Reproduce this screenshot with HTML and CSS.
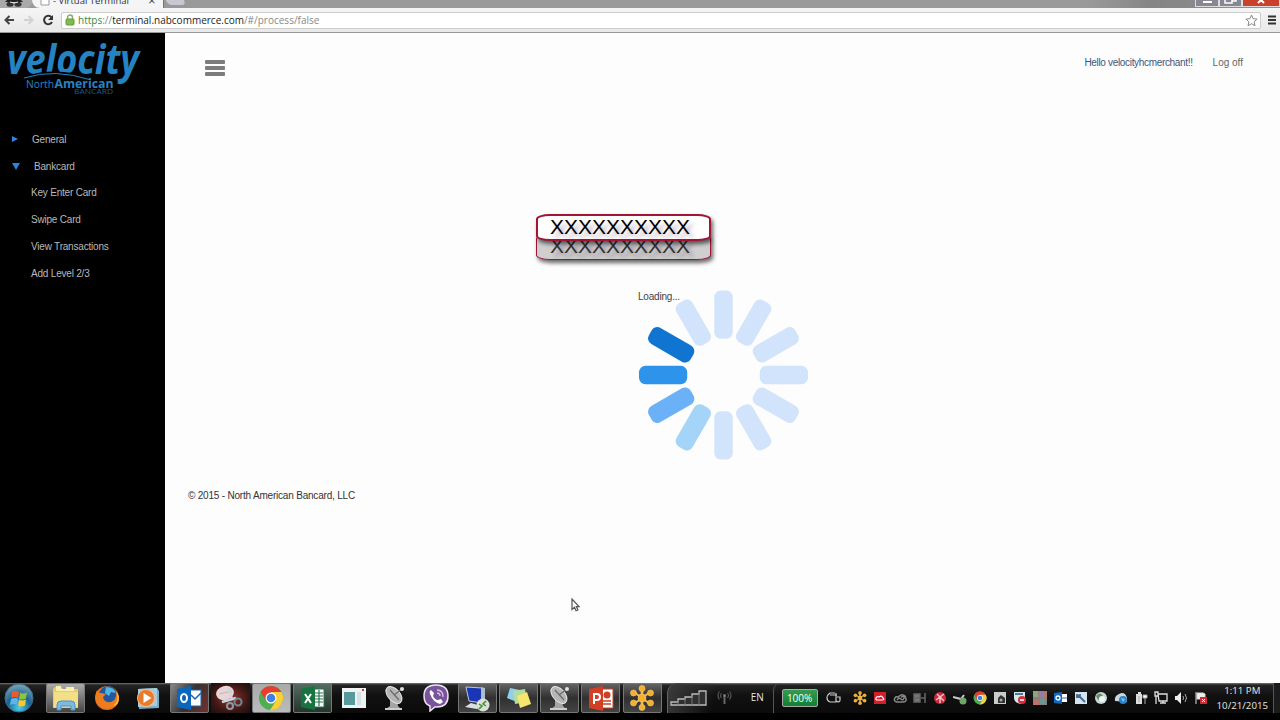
FILE: index.html
```
<!DOCTYPE html>
<html lang="en">
<head>
    <meta charset="UTF-8">
    <title>Virtual Terminal</title>
    <link rel="stylesheet" href="styles.css">
</head>
<body>

<!-- browser chrome -->
<div class="tab-strip">
    <div class="incognito">
        <svg width="30" height="8" viewBox="0 0 30 8"><path d="M7 0h14l2 2H5z" fill="#222"/><ellipse cx="10" cy="4.200" rx="3.500" ry="2.500" fill="#333"/><ellipse cx="18" cy="4.200" rx="3.500" ry="2.500" fill="#333"/><path d="M10 2q4 2 8 0" stroke="#eee" fill="none"/></svg>
    </div>
    <div class="tab">
        <svg class="tab-icon" width="11" height="6"><path d="M1 0v5h8V0" fill="#fff" stroke="#999"/></svg>
        <span class="tab-title">- Virtual Terminal</span>
        <span class="tab-close">×</span>
    </div>
    <div class="new-tab"></div>
    <div class="window-buttons">
        <span class="win-btn"><svg width="22" height="8"><path d="M7 2h9" stroke="#fff" stroke-width="2"/></svg></span>
        <span class="win-btn"><svg width="21" height="8"><path d="M5-1v4h7v-4M9-2h7V1h-4" stroke="#fff" stroke-width="1.500" fill="none"/></svg></span>
        <span class="win-btn close"><svg width="36" height="8"><path d="M15 3l6-6M21 3l-6-6" stroke="#fff" stroke-width="2"/></svg></span>
    </div>
</div>
<div class="toolbar">
    <svg class="nav-icons" width="64" height="22" viewBox="0 0 64 22">
        <path d="M14 11H6M9.500 7L5.500 11l4 4" fill="none" stroke="#444" stroke-width="2"/>
        <path d="M24 11h8M28.500 7l4 4-4 4" fill="none" stroke="#d2d2d2" stroke-width="2"/>
        <path d="M51.500 8.300A4.200 4.200 0 1 0 52 13" fill="none" stroke="#333" stroke-width="2"/>
        <path d="M53 6v5h-5z" fill="#333"/>
    </svg>
    <div class="address-bar">
        <svg width="10" height="12" viewBox="0 0 10 12"><path d="M2.500 6V3.500a2.500 2.500 0 0 1 5 0V6" fill="none" stroke="#87a877" stroke-width="1.500"/><rect x="1" y="5" width="8" height="6" rx="1" fill="#7fbb4d" stroke="#659c40"/></svg>
        <span class="url"><span class="secure">https</span>://<span class="host">terminal.nabcommerce.com</span>/#/process/false</span>
        <svg class="star" width="13" height="13" viewBox="0 0 13 13"><path d="M6.500 1l1.600 3.700 4 .4-3 2.700.9 4-3.500-2.100L3 11.800l.9-4-3-2.700 4-.4z" fill="#fff" stroke="#888"/></svg>
    </div>
    <svg width="10" height="12"><path d="M1 2.500h8M1 6h8M1 9.500h8" stroke="#333" stroke-width="2"/></svg>
</div>

<div class="page">
    <div class="sidebar">
        <svg class="logo" width="160" height="66" viewBox="0 0 160 66">
            <text class="logo-name" x="7" y="41" textLength="132" lengthAdjust="spacingAndGlyphs">velocity</text>
            <path d="M24 45Q55 34 91 46" fill="none" stroke="#000" stroke-width="2.500"/>
            <path d="M24 45Q55 35 91 47" fill="none" stroke="#2583c4"/>
            <text class="logo-north" x="26" y="55" textLength="28" lengthAdjust="spacingAndGlyphs">North</text>
            <text class="logo-american" x="54.500" y="55" textLength="59" lengthAdjust="spacingAndGlyphs">American</text>
            <text class="logo-bancard" x="74" y="61" textLength="39" lengthAdjust="spacingAndGlyphs">BANCARD</text>
        </svg>
        <div class="menu">
            <div class="menu-group"><span class="arrow right"></span>General</div>
            <div class="menu-group open"><span class="arrow down"></span>Bankcard</div>
            <div class="menu-item">Key Enter Card</div>
            <div class="menu-item">Swipe Card</div>
            <div class="menu-item">View Transactions</div>
            <div class="menu-item">Add Level 2/3</div>
        </div>
    </div>

    <div class="content">
        <div class="header">
            <div class="hamburger"><span></span><span></span><span></span></div>
            <div class="user">
                <span class="hello">Hello velocityhcmerchant!!</span>
                <span class="logoff">Log off</span>
            </div>
        </div>
        <div class="masks">
            <div class="mask">XXXXXXXXXX</div>
            <div class="mask mask-back">XXXXXXXXXX</div>
        </div>
        <div class="loading">
            <span class="loading-text">Loading...</span>
            <svg class="spinner" width="171" height="172" viewBox="-86 -86 172 172">
                <defs><rect id="bar" x="-9.300" y="-85" width="18.600" height="48.500" rx="6.500"/></defs>
                <g fill="#d1e4fc">
                    <use href="#bar"/>
                    <use href="#bar" transform="rotate(30)"/>
                    <use href="#bar" transform="rotate(60)"/>
                    <use href="#bar" transform="rotate(90)"/>
                    <use href="#bar" transform="rotate(120)"/>
                    <use href="#bar" transform="rotate(150)"/>
                    <use href="#bar" transform="rotate(180)"/>
                    <use href="#bar" transform="rotate(330)"/>
                </g>
                <use href="#bar" transform="rotate(210)" fill="#a4d4f8"/>
                <use href="#bar" transform="rotate(240)" fill="#6ab1f7"/>
                <use href="#bar" transform="rotate(270)" fill="#2e94eb"/>
                <use href="#bar" transform="rotate(300)" fill="#1075d0"/>
            </svg>
        </div>
        <div class="footer">© 2015 - North American Bancard, LLC</div>
    </div>
</div>

<svg class="cursor" width="9" height="14" viewBox="0 0 9 14"><path d="M1 1v10.500l2.500-2.200 1.600 3.400 1.800-.8-1.500-3.300H8z" fill="#fff" stroke="#555" stroke-width="1.200"/></svg>

<div class="taskbar">
    <div class="start">
        <svg width="30" height="30" viewBox="0 0 30 30">
            <defs><radialGradient id="orb" cx=".5" cy=".85" r=".85"><stop offset="0" stop-color="#49d0ef"/><stop offset=".5" stop-color="#176394"/><stop offset="1" stop-color="#7fa7bb"/></radialGradient></defs>
            <circle cx="15" cy="15" r="14" fill="url(#orb)" stroke="#466b7e"/>
            <path d="M8 9q4-2 7 0l-1 6q-3-2-7 0z" fill="#ea5c28"/><path d="M16 9.500q3 2 7 0l-1 6q-4 2-7 0z" fill="#8bc53f"/>
            <path d="M7 16q4-2 7 0l-1 6q-3-2-7 0z" fill="#5eb5ea"/><path d="M15 16.500q3 2 7 0l-1 6q-4 2-7 0z" fill="#fac82c"/>
        </svg>
    </div>
    <div class="apps">
        <div class="app active bright">
            <svg width="28" height="28" viewBox="0 0 28 28"><path d="M1 5l2-2h6l2 2h15v19H1z" fill="#e9cc68"/><path d="M4 2h5v3h5V3h8v4H4z" fill="#f9efb1"/><path d="M2 8h24v15H2z" fill="#f5df86"/><path d="M5 26v-5q0-4 4-4h10q4 0 4 4v5h-4v-4h-10v4z" fill="#7bb9e6" stroke="#4b91c6"/></svg>
        </div>
        <div class="app">
            <svg width="26" height="26" viewBox="0 0 26 26"><circle cx="13" cy="13" r="12" fill="#e8701a"/><circle cx="14" cy="10" r="9" fill="#2358a0"/><path d="M12 2q8 0 10 6l-5-1-2 4-4-3z" fill="#54b6df"/><path d="M3 5q0 3 4 3l5 1-3 3 1 3q4 4 9 1 4-3 3-9 4 9-2 14-7 5-14 0Q-1 15 3 5z" fill="#ee7d1d"/><path d="M22 7q4 9-3 14 6-1 6-8-1-5-3-6z" fill="#ffc32d"/></svg>
        </div>
        <div class="app">
            <svg width="24" height="24" viewBox="0 0 24 24"><path d="M2 3l19-1 2 3v17l-20 1z" fill="#79abc5"/><path d="M2 3l19-1v18l-19 1z" fill="#a7cddd"/><circle cx="10" cy="12" r="8.500" fill="#e9792b" stroke="#f7bd8b"/><path d="M7.500 7v10l8-5z" fill="#fff"/></svg>
        </div>
        <div class="app active warm">
            <svg width="26" height="24" viewBox="0 0 26 24"><rect x="13" y="4" width="12" height="16" fill="#fff" stroke="#1b65ae"/><path d="M15 9l4 4 6-6" fill="none" stroke="#1b65ae" stroke-width="1.500"/><path d="M1 3l14-3v24l-14-3z" fill="#0b67bb"/><ellipse cx="8" cy="12" rx="3" ry="4" fill="none" stroke="#fff" stroke-width="2"/></svg>
        </div>
        <div class="app red">
            <svg width="30" height="28" viewBox="0 0 30 28"><ellipse cx="10" cy="9" rx="9" ry="7" fill="#e8d5d8" transform="rotate(-15 10 9)"/><path d="M4 10l13-3" stroke="#d5acb5"/><path d="M14 4l3 12M7 18l14-4" stroke="#cfd5da" stroke-width="2.500"/><circle cx="15" cy="22" r="3" fill="none" stroke="#8b9aa8" stroke-width="2"/><circle cx="23" cy="18" r="3.500" fill="none" stroke="#71869b" stroke-width="2"/></svg>
        </div>
        <div class="app active silver">
            <svg width="26" height="26" viewBox="0 0 26 26"><use href="#chrome"/></svg>
        </div>
        <div class="app active green">
            <svg width="26" height="24" viewBox="0 0 26 24"><rect x="13" y="3" width="11" height="18" fill="#fff" stroke="#24754a"/><path d="M15 7h8M15 10h8M15 13h8M15 16h8M19 4v16" stroke="#24754a" stroke-width="1.200"/><path d="M1 3l14-3v24L1 21z" fill="#17733f"/><path d="M5 8l6 9M11 8l-6 9" stroke="#fff" stroke-width="2"/></svg>
        </div>
        <div class="app">
            <svg width="26" height="22" viewBox="0 0 26 22"><path d="M1 1h24v20H1z" fill="#eef2f2"/><path d="M3 5h11v13H3z" fill="#579a9e"/><path d="M16 5h4v13h-4z" fill="#d4e2e4"/><path d="M22 2v2" stroke="#cc3b31" stroke-width="2"/></svg>
        </div>
        <div class="app">
            <svg width="26" height="26" viewBox="0 0 26 26"><use href="#dish"/></svg>
        </div>
        <div class="app">
            <svg width="27" height="28" viewBox="0 0 27 28"><path d="M13 1q12 0 12 11T14 23h-2l-5 4v-5Q1 20 1 12 1 1 13 1z" fill="#79549c" stroke="#eee3f4" stroke-width="1.500"/><path d="M8 6l3 3-1 3q2 4 5 4l3-1 2 3-3 2Q10 18 7 10q-1-3 1-4z" fill="#fff"/><path d="M14 6q6 0 6 7M14 9q3 0 3 3" fill="none" stroke="#d9bfe8" stroke-width="1.300"/></svg>
        </div>
        <div class="app active">
            <svg width="28" height="27" viewBox="0 0 28 27"><path d="M3 2l16 1v15l-13-2z" fill="#1836b5" stroke="#b7c9e7"/><path d="M18 2l4 1v15l-4-1z" fill="#aebdcd"/><path d="M2 22l6-4 10 3-4 3z" fill="#d9dfe4"/><circle cx="20" cy="20" r="6.500" fill="#dae1d4"/><path d="M16 19l3 2-3 3M23 16l-3 3 3 2" fill="none" stroke="#3e8b40" stroke-width="1.500"/></svg>
        </div>
        <div class="app active">
            <svg width="28" height="26" viewBox="0 0 28 26"><path d="M5 3l10 2-3 12-10-4z" fill="#8ed0ee"/><path d="M8 6l12-2 2 13-12 2z" fill="#b2dca0"/><path d="M12 11l10-4 4 12-11 4z" fill="#f7e66e"/></svg>
        </div>
        <div class="app active">
            <svg width="26" height="26" viewBox="0 0 26 26"><use href="#dish"/></svg>
        </div>
        <div class="app active">
            <svg width="26" height="25" viewBox="0 0 26 25"><path d="M14 3h11v19H14z" fill="#fff" stroke="#ce4023"/><circle cx="19" cy="9" r="3.500" fill="#ce4023"/><path d="M15 15h8M15 18h8" stroke="#ce4023" stroke-width="1.500"/><path d="M1 3l14-3v25L1 22z" fill="#d33f24"/><path d="M6 18V8h3q3 0 3 3t-3 3H6" fill="none" stroke="#fff" stroke-width="2"/></svg>
        </div>
        <div class="app active">
            <svg width="26" height="26" viewBox="0 0 26 26"><use href="#flower"/></svg>
        </div>
    </div>

    <div class="network">
        <svg width="38" height="18" viewBox="0 0 38 18"><path d="M1 16v-3h7v-3h7V8h7V5h7V2h7v14z" fill="#303030" stroke="#bbb" stroke-width="1.300"/><path d="M8 12v4M15 9v7M22 7v9M29 4v12" stroke="#777"/></svg>
        <svg width="15" height="16" viewBox="0 0 15 16"><path d="M7.500 6v8" stroke="#666" stroke-width="2"/><path d="M4.500 3q-2 2.500 0 5M10.500 3q2 2.500 0 5M2.500 1.500q-3 4 0 8M12.500 1.500q3 4 0 8" fill="none" stroke="#555" stroke-width="1.200"/><circle cx="7.500" cy="5.500" r="1.500" fill="#777"/></svg>
    </div>
    <span class="lang">EN</span>
    <div class="power">
        <div class="battery">100%</div>
        <svg width="16" height="12" viewBox="0 0 16 12"><path d="M9 1H4q-3 2-3 5t3 4h6V7M4 3h7M10 1v8q4 2 4-1V5h-3" fill="none" stroke="#ccc" stroke-width="1.200"/></svg>
    </div>
    <div class="tray">
        <svg viewBox="0 0 14 14"><g transform="scale(.54)"><use href="#flower"/></g></svg>
        <svg viewBox="0 0 14 14"><rect x="1" y="1" width="12" height="12" fill="#d31e2c"/><path d="M5 9q-3 0-2-2 1-2 3-1 3-2 4 1 2 2-1 2z" fill="none" stroke="#fff" stroke-width="1.200"/></svg>
        <svg viewBox="0 0 14 14"><path d="M4 11Q0 10 2 7q1-2 3-1Q9 2 12 5q3 6-2 6zM4 9q2-3 4-1t3-1-3-1" fill="none" stroke="#888" stroke-width="1.500"/></svg>
        <svg viewBox="0 0 14 14"><path d="M1 3h6v8H1zM8 7h4M12 2v10M1 7h6" fill="#777" stroke="#666" stroke-width="1.500"/></svg>
        <svg viewBox="0 0 14 14"><circle cx="7" cy="7" r="6" fill="#ce263b"/><path d="M4 3l3 3 4-3M3 9l4-3v6M7 6l4 4" stroke="#f8c1c7" stroke-width="1.500" fill="none"/></svg>
        <svg viewBox="0 0 14 14"><path d="M0 6l8 2 3-4" fill="none" stroke="#ccc" stroke-width="2"/><circle cx="10" cy="10" r="3.500" fill="#6da667"/></svg>
        <svg viewBox="0 0 14 14"><g transform="scale(.54)"><use href="#chrome"/></g></svg>
        <svg viewBox="0 0 14 14"><rect x="1" y="1" width="12" height="12" fill="#c9cccc"/><path d="M5 12V7l3-3 4 3v5z" fill="#333"/><circle cx="8" cy="9" r="1.500" fill="#aaa"/></svg>
        <svg viewBox="0 0 14 14"><path d="M1 1h11v6q0 4-5 6-6-2-6-6z" fill="#dae5e8"/><path d="M2 3h8" stroke="#388399" stroke-width="2"/><circle cx="9" cy="9" r="4" fill="#d43040"/><path d="M7 9h4" stroke="#fff" stroke-width="1.500"/></svg>
        <svg viewBox="0 0 14 14"><rect width="14" height="14" fill="#8a807e"/><path d="M0 0h5v6H0z" fill="#90a575"/><path d="M6 0h4v7H6z" fill="#907fac"/><path d="M10 1h4v6h-4zM1 9h5v5H1z" fill="#b8756c"/><path d="M7 8h5v5H7z" fill="#659b99"/></svg>
        <svg viewBox="0 0 14 14"><path d="M7 3h6v8H7z" fill="#fff"/><path d="M8 7h5" stroke="#2472b7"/><path d="M0 2l8-1v12l-8-1z" fill="#1269bd"/><circle cx="4" cy="7" r="2" fill="none" stroke="#fff" stroke-width="1.300"/></svg>
        <svg viewBox="0 0 14 14"><rect x="1" y="1" width="12" height="12" fill="#d5e3ec"/><path d="M4 4l7 7M3 3v3h3V3" stroke="#416a91" stroke-width="1.800" fill="none"/></svg>
        <svg viewBox="0 0 14 14"><circle cx="7" cy="7" r="6" fill="#c9d8d2"/><path d="M2 5q4-5 7 0L4 9z" fill="#638b65"/><circle cx="8" cy="8" r="3" fill="#eef6f8"/></svg>
        <svg viewBox="0 0 14 14"><path d="M1 10q-1-5 4-7 6-3 8 4v4z" fill="#c9d7df"/><circle cx="9" cy="9" r="4" fill="#2b82c7"/><path d="M7 7l4 1-2 3" fill="#82c6e7"/></svg>
        <svg viewBox="0 0 14 14"><path d="M2 3h6v10H2zM4 1h3v2H4z" fill="#ddd"/><path d="M9 4h4v3h-4zM11 7v6M5 5v6" fill="#fff" stroke="#aaa"/></svg>
        <svg viewBox="0 0 14 14"><path d="M4 3h9v7H5zM9 10v2M6 12h6M1 1h3v4H1zM2 5v8" fill="none" stroke="#ddd" stroke-width="1.300"/></svg>
        <svg viewBox="0 0 14 14"><path d="M1 5h2l4-4v12L3 9H1z" fill="#eee"/><path d="M9 5q1 2 0 4M11 3q3 4 0 8" fill="none" stroke="#aaa"/></svg>
        <svg viewBox="0 0 14 14"><path d="M2 1v12M3 2h6l2 1v5H3z" fill="#eee" stroke="#ddd"/><rect x="6" y="6" width="7" height="7" fill="#c82c35"/><path d="M8 8l3 3M11 8l-3 3" stroke="#fff"/></svg>
    </div>
    <div class="clock"><span>1:11 PM</span><span>10/21/2015</span></div>
    <div class="show-desktop"></div>
</div>

<!-- shared icons -->
<svg class="symbols" width="0" height="0">
    <defs>
        <g id="chrome"><circle cx="13" cy="13" r="12" fill="#4caf50"/><path d="M2.600 7A12 12 0 0 1 23.400 7H13L8 16z" fill="#e53e30"/><path d="M23.400 7A12 12 0 0 1 12 25l6-9-5-9z" fill="#fbcf36"/><circle cx="13" cy="13" r="5.500" fill="#fff"/><circle cx="13" cy="13" r="4.300" fill="#427fe4"/></g>
        <g id="dish"><path d="M8 14h7l1 7 3 3H4l4-3z" fill="#a4a4a4"/><ellipse cx="12" cy="10" rx="10" ry="6" transform="rotate(48 12 10)" fill="#b5b5b5" stroke="#e7e7e7"/><path d="M8 5l9 10M12 10l8-6" stroke="#6a6a6a" stroke-width="1.200"/><circle cx="20" cy="4" r="2" fill="#e2e2e2"/><path d="M3 24h17" stroke="#ccc" stroke-width="2"/></g>
        <g id="flower" fill="#f6ae32" stroke="#fad06b" stroke-width=".6">
            <path d="M12 5h2v16h-2zM5 8l1-1 15 11-1 1zM20 7l1 1L6 19l-1-1z"/>
            <circle cx="13" cy="13" r="4"/><circle cx="13" cy="3.500" r="3"/><circle cx="13" cy="22.500" r="3"/>
            <circle cx="4.500" cy="8" r="3"/><circle cx="21.500" cy="8" r="3"/><circle cx="4.500" cy="18" r="3"/><circle cx="21.500" cy="18" r="3"/>
        </g>
    </defs>
</svg>

</body>
</html>
```
FILE: styles.css
```
body {
    margin: 0;
    width: 1280px;
    height: 720px;
    overflow: hidden;
    display: flex;
    flex-direction: column;
    background-color: #fdfdfd;
    font-family: "Liberation Sans", Arial, sans-serif;
    font-size: 10px;
    color: #444;
}
svg {
    display: block;
    flex: none;
}

/* browser */
.tab-strip {
    height: 8px;
    flex: none;
    display: flex;
    overflow: hidden;
    background: linear-gradient(90deg, #999, #9a9a9a 85%, #858585 90%, #929292);
}
.incognito {
    width: 32px;
    background-color: #a9a9a9;
    border-radius: 0 0 6px 0;
}
.tab {
    width: 123px;
    padding-left: 8px;
    display: flex;
    background-color: #f5f5f5;
    border-right: 1px solid #777;
    border-radius: 0 0 0 8px;
}
.tab-title {
    margin-left: 2px;
    width: 94px;
    line-height: 10px;
    margin-top: -4px;
    font-family: "Open Sans", sans-serif;
    font-size: 9.5px;
    color: #333;
    white-space: nowrap;
}
.tab-close {
    margin: -6px 0 0 1px;
    font-size: 13px;
    line-height: 13px;
}
.new-tab {
    width: 18px;
    height: 5px;
    margin-left: 3px;
    background-color: #c9c8ce;
    border-radius: 0 0 4px 4px;
    transform: skewX(25deg);
}
.window-buttons {
    display: flex;
    margin-left: auto;
    height: 7px;
}
.win-btn {
    background-color: #878794;
    border: 1px solid #ddd;
    border-top: none;
    overflow: hidden;
}
.win-btn.close {
    background-color: #c9412a;
}
.toolbar {
    height: 24px;
    flex: none;
    display: flex;
    align-items: center;
    background: linear-gradient(#f5f5f5, #e9e9e9);
    border-bottom: 1px solid #999;
}
.nav-icons {
    margin-right: -3px;
}
.address-bar {
    width: 1200px;
    height: 17px;
    margin-right: 6px;
    padding-left: 3px;
    box-sizing: border-box;
    display: flex;
    align-items: center;
    background-color: #fff;
    border: 1px solid #ccc;
    border-radius: 2px;
}
.url {
    margin-left: 3px;
    font-family: "Open Sans", sans-serif;
    font-size: 10px;
    letter-spacing: 0;
    color: #888;
}
.secure {
    color: #39893d;
}
.host {
    color: #222;
}
.star {
    margin-left: auto;
    margin-right: 2px;
}

/* page */
.page {
    flex: 1;
    display: flex;
    letter-spacing: -0.2px;
}
.sidebar {
    width: 165px;
    flex: none;
    background-color: #000;
    color: #b9b9b9;
}
.logo text {
    font-family: "Open Sans", sans-serif;
    letter-spacing: 0;
    fill: #2583c4;
}
.logo .logo-name {
    font-size: 41px;
    font-weight: bold;
    font-style: italic;
}
.logo .logo-north {
    font-size: 11px;
}
.logo .logo-american {
    font-size: 12px;
    font-weight: bold;
}
.logo .logo-bancard {
    font-size: 8px;
    fill: #1d5a88;
}
.menu {
    padding-top: 27px;
}
.menu-group,
.menu-item {
    height: 26.75px;
    display: flex;
    align-items: center;
}
.menu-group {
    padding-left: 12px;
}
.menu-item {
    padding-left: 31px;
}
.arrow {
    border: 3px solid transparent;
}
.arrow.right {
    border-left: 6px solid #2b84de;
    border-right: none;
    margin-right: 14px;
}
.arrow.down {
    border-width: 7px 4px 0;
    border-top-color: #2b84de;
    margin-right: 14px;
}
.content {
    flex: 1;
}
.header {
    height: 60px;
    padding: 0 37px 0 40px;
    display: flex;
    justify-content: space-between;
}
.hamburger {
    display: flex;
    flex-direction: column;
    gap: 2px;
    padding-top: 27px;
}
.hamburger span {
    width: 20px;
    height: 4px;
    border-radius: 1px;
    background-color: #7c7c7c;
}
.user {
    padding-top: 24px;
    display: flex;
    gap: 20px;
}
.hello {
    color: #3c5580;
    letter-spacing: -0.33px;
}
.logoff {
    color: #666;
    letter-spacing: 0;
}
.masks {
    width: 175px;
    margin: 121px 0 0 371px;
}
.mask {
    position: relative;
    z-index: 1;
    height: 27px;
    box-sizing: border-box;
    padding-left: 12px;
    line-height: 22px;
    font-size: 21px;
    letter-spacing: 0;
    color: #000;
    background-color: #fff;
    border: 2px solid #a11535;
    border-radius: 14px / 5px;
    box-shadow: 2px 3px 4px rgba(0, 0, 0, 0.6);
    text-shadow: 4px 4px 4px rgba(80, 50, 80, 0.4);
}
.mask-back {
    z-index: 0;
    height: 26px;
    margin-top: -7px;
    padding-left: 13px;
    color: #333;
    background-color: #cfcfcf;
    border-width: 1px;
}
.loading {
    display: flex;
    height: 172px;
    margin: 29px 0 0 473px;
}
.loading-text {
    width: 0;
    white-space: nowrap;
    padding-top: 2px;
}
.footer {
    margin: 29px 0 0 23px;
    color: #333;
}
.cursor {
    position: absolute;
    left: 571px;
    top: 598px;
}

/* taskbar */
.taskbar {
    height: 30px;
    flex: none;
    display: flex;
    color: #e6e6e6;
    background: linear-gradient(#777, #242424 2px, #111 12px, #0b0b0b);
    border-bottom: 7px solid #000;
}
.start {
    width: 46px;
    padding-left: 4px;
    box-sizing: border-box;
}
.apps {
    display: flex;
    gap: 2.2px;
}
.app {
    width: 39px;
    box-sizing: border-box;
    display: flex;
    align-items: center;
    justify-content: center;
}
.app.active {
    background: linear-gradient(#626262, #303030 50%, #444);
    border: 1px solid #777;
    border-radius: 2px;
}
.app.bright {
    background: linear-gradient(#aaa, #454542);
}
.app.warm {
    background: linear-gradient(120deg, #888, #333 50%, #75302b);
}
.app.red {
    background: radial-gradient(#92352c, #391613 65%, #181010);
}
.app.silver {
    background: linear-gradient(#aaa, #bbb);
}
.app.green {
    background: linear-gradient(#566b60, #24362d);
}
.network {
    width: 77px;
    margin-left: 5px;
    padding-left: 2px;
    box-sizing: border-box;
    display: flex;
    align-items: center;
    gap: 9px;
    border-left: 1px solid #666;
    border-radius: 10px 0 0 0;
    background: linear-gradient(100deg, #3b3b3b, transparent 60%);
}
.lang {
    width: 29px;
    line-height: 29px;
    padding-left: 7px;
    box-sizing: border-box;
    font-family: "Open Sans", sans-serif;
}
.power {
    width: 80px;
    padding-left: 8px;
    box-sizing: border-box;
    display: flex;
    align-items: center;
    gap: 8px;
    border-left: 1px solid #555;
    border-radius: 8px 0 0 0;
}
.battery {
    width: 34px;
    height: 16px;
    flex: none;
    line-height: 16px;
    text-align: center;
    color: #fff;
    background: linear-gradient(#349c50, #108034);
    border: 1px solid #aaa;
    border-radius: 2px;
    font-family: "Open Sans", sans-serif;
}
.tray {
    display: flex;
    align-items: center;
    gap: 6.1px;
}
.tray svg {
    width: 14px;
    height: 14px;
}
.clock {
    margin-left: auto;
    padding: 1px 5px 0 0;
    display: flex;
    flex-direction: column;
    align-items: center;
    font-family: "Open Sans", sans-serif;
    font-size: 9.7px;
    line-height: 14.5px;
}
.show-desktop {
    width: 7px;
    border-left: 1px solid #555;
    box-sizing: border-box;
    background-color: #1b1b1b;
}
.symbols {
    position: absolute;
}
```
